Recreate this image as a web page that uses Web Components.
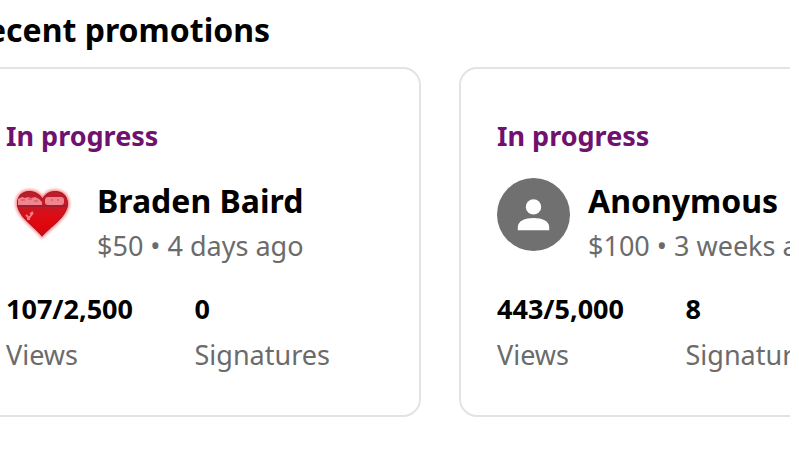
<!DOCTYPE html>
<html lang="en">
<head>
<meta charset="utf-8">
<title>Recent promotions</title>
<style>
  body { margin: 0; background: #fff; color: #000; font-family: "Noto Sans", sans-serif; overflow-x: hidden; }
</style>
</head>
<body>
<promotion-list>
  <span slot="heading">Recent promotions</span>
  <promotion-card>
    <heart-avatar slot="avatar"></heart-avatar>
    <span slot="status">In progress</span>
    <span slot="name">Braden Baird</span>
    <span slot="detail">$50 • 4 days ago</span>
    <promotion-stat slot="stats" label="Views">107/2,500</promotion-stat>
    <promotion-stat slot="stats" label="Signatures">0</promotion-stat>
  </promotion-card>
  <promotion-card>
    <person-avatar slot="avatar"></person-avatar>
    <span slot="status">In progress</span>
    <span slot="name">Anonymous</span>
    <span slot="detail">$100 • 3 weeks ago</span>
    <promotion-stat slot="stats" label="Views">443/5,000</promotion-stat>
    <promotion-stat slot="stats" label="Signatures">8</promotion-stat>
  </promotion-card>
</promotion-list>
<script>
const define = (name, html) => customElements.define(name, class extends HTMLElement {
  connectedCallback() {
    if (this.shadowRoot) return;
    this.attachShadow({ mode: "open" }).innerHTML = html;
    const label = this.shadowRoot.querySelector("[data-label]");
    if (label) label.textContent = this.getAttribute("label");
  }
});

define("promotion-list", `
  <style>
    :host { display: block; margin: 0 9px 0 -34px; padding-top: 8px; overflow: hidden; }
    h2 { margin: 0 0 15px; font-size: 32px; line-height: 44px; font-weight: 700; }
    .track { display: flex; gap: 38px; padding: 0 2px; }
  </style>
  <h2><slot name="heading"></slot></h2>
  <div class="track"><slot></slot></div>`);

define("promotion-card", `
  <style>
    :host { display: block; box-sizing: border-box; flex: 0 0 453px; padding: 49px 36px 42px; border: 2px solid #e3e3e3; border-radius: 18px; font-size: 27px; line-height: 36px; }
    .status { color: #70106f; font-weight: 700; }
    .owner { display: flex; gap: 18px; margin: 24px 0 27px; }
    .text { min-width: 0; white-space: nowrap; }
    .name { font-size: 32px; line-height: 46px; font-weight: 700; margin-bottom: 4px; }
    .detail { color: #6b6b6b; }
    .stats { display: grid; grid-template-columns: 1fr 1fr; }
  </style>
  <div class="status"><slot name="status"></slot></div>
  <div class="owner">
    <slot name="avatar"></slot>
    <div class="text">
      <div class="name"><slot name="name"></slot></div>
      <div class="detail"><slot name="detail"></slot></div>
    </div>
  </div>
  <div class="stats"><slot name="stats"></slot></div>`);

define("promotion-stat", `
  <style>
    :host { display: flex; flex-direction: column; gap: 10px; }
    .value { font-weight: 700; }
    .label { color: #6b6b6b; }
  </style>
  <span class="value"><slot></slot></span>
  <span class="label" data-label></span>`);

define("person-avatar", `
  <style>
    :host { display: block; flex: none; width: 73px; height: 73px; }
    svg { display: block; width: 100%; height: 100%; }
  </style>
  <svg viewBox="0 0 72 72" aria-hidden="true">
    <circle cx="36" cy="36" r="36" fill="#707070"/>
    <circle cx="36" cy="28.5" r="7.6" fill="#fff"/>
    <path d="M20.5 51.5v-3c0-6 7-9 15.500-9s15.500 3 15.500 9v3z" fill="#fff"/>
  </svg>`);

define("heart-avatar", `
  <style>
    :host { display: block; flex: none; width: 73px; height: 73px; }
    svg { display: block; width: 100%; height: 100%; }
  </style>
  <svg viewBox="0 0 73 73" aria-hidden="true">
    <defs>
      <linearGradient id="red" x1="0" y1="0" x2="0" y2="1">
        <stop offset="0" stop-color="#b81f2e"/><stop offset=".35" stop-color="#c51824"/>
        <stop offset=".55" stop-color="#dd0c14"/><stop offset="1" stop-color="#e00008"/>
      </linearGradient>
      <filter id="glow" x="-20%" y="-20%" width="140%" height="140%"><feGaussianBlur stdDeviation="1.600"/></filter>
      <filter id="soft"><feGaussianBlur stdDeviation=".6"/></filter>
      <clipPath id="shape"><path d="M36 58.500C31 51 11 39 11 25.500C11 17 17 13 23.500 13C30 13 34.500 17 36.500 20.500C39 16 43.500 13 49 13C56 13 62 17.500 62 25.500C62 39 43 50 36 58.500z"/></clipPath>
    </defs>
    <path filter="url(#glow)" fill="#ff7777" stroke="#ff8080" stroke-width="3" d="M36 58.500C31 51 11 39 11 25.500C11 17 17 13 23.500 13C30 13 34.500 17 36.500 20.500C39 16 43.500 13 49 13C56 13 62 17.500 62 25.500C62 39 43 50 36 58.500z"/>
    <g clip-path="url(#shape)">
      <path fill="url(#red)" stroke="#a51e2b" stroke-width="2" d="M36 58.500C31 51 11 39 11 25.500C11 17 17 13 23.500 13C30 13 34.500 17 36.500 20.500C39 16 43.500 13 49 13C56 13 62 17.500 62 25.500C62 39 43 50 36 58.500z"/>
      <g filter="url(#soft)">
        <path d="M11 28h50" stroke="#a51a2d" stroke-width="2"/>
        <path d="M12 21l4-2 3 1 3-1 3 1 4-1 4 2 3 3v3H12z" fill="#f08590"/>
        <rect x="39" y="19" width="19" height="8" rx="3" fill="#f08590"/>
        <path d="M15 22h4m3-1h4m2 2h4M45 22h2m4 0h2" stroke="#d8606e" stroke-width="1.500"/>
        <path d="M20 37l3 3 4-5m-3 1 3-2M21 41h3" fill="none" stroke="#f47f88" stroke-width="1.800"/>
        <path d="M30 51l6 7 7-7" fill="none" stroke="#b31520" stroke-width="2"/>
      </g>
    </g>
  </svg>`);
</script>
</body>
</html>
